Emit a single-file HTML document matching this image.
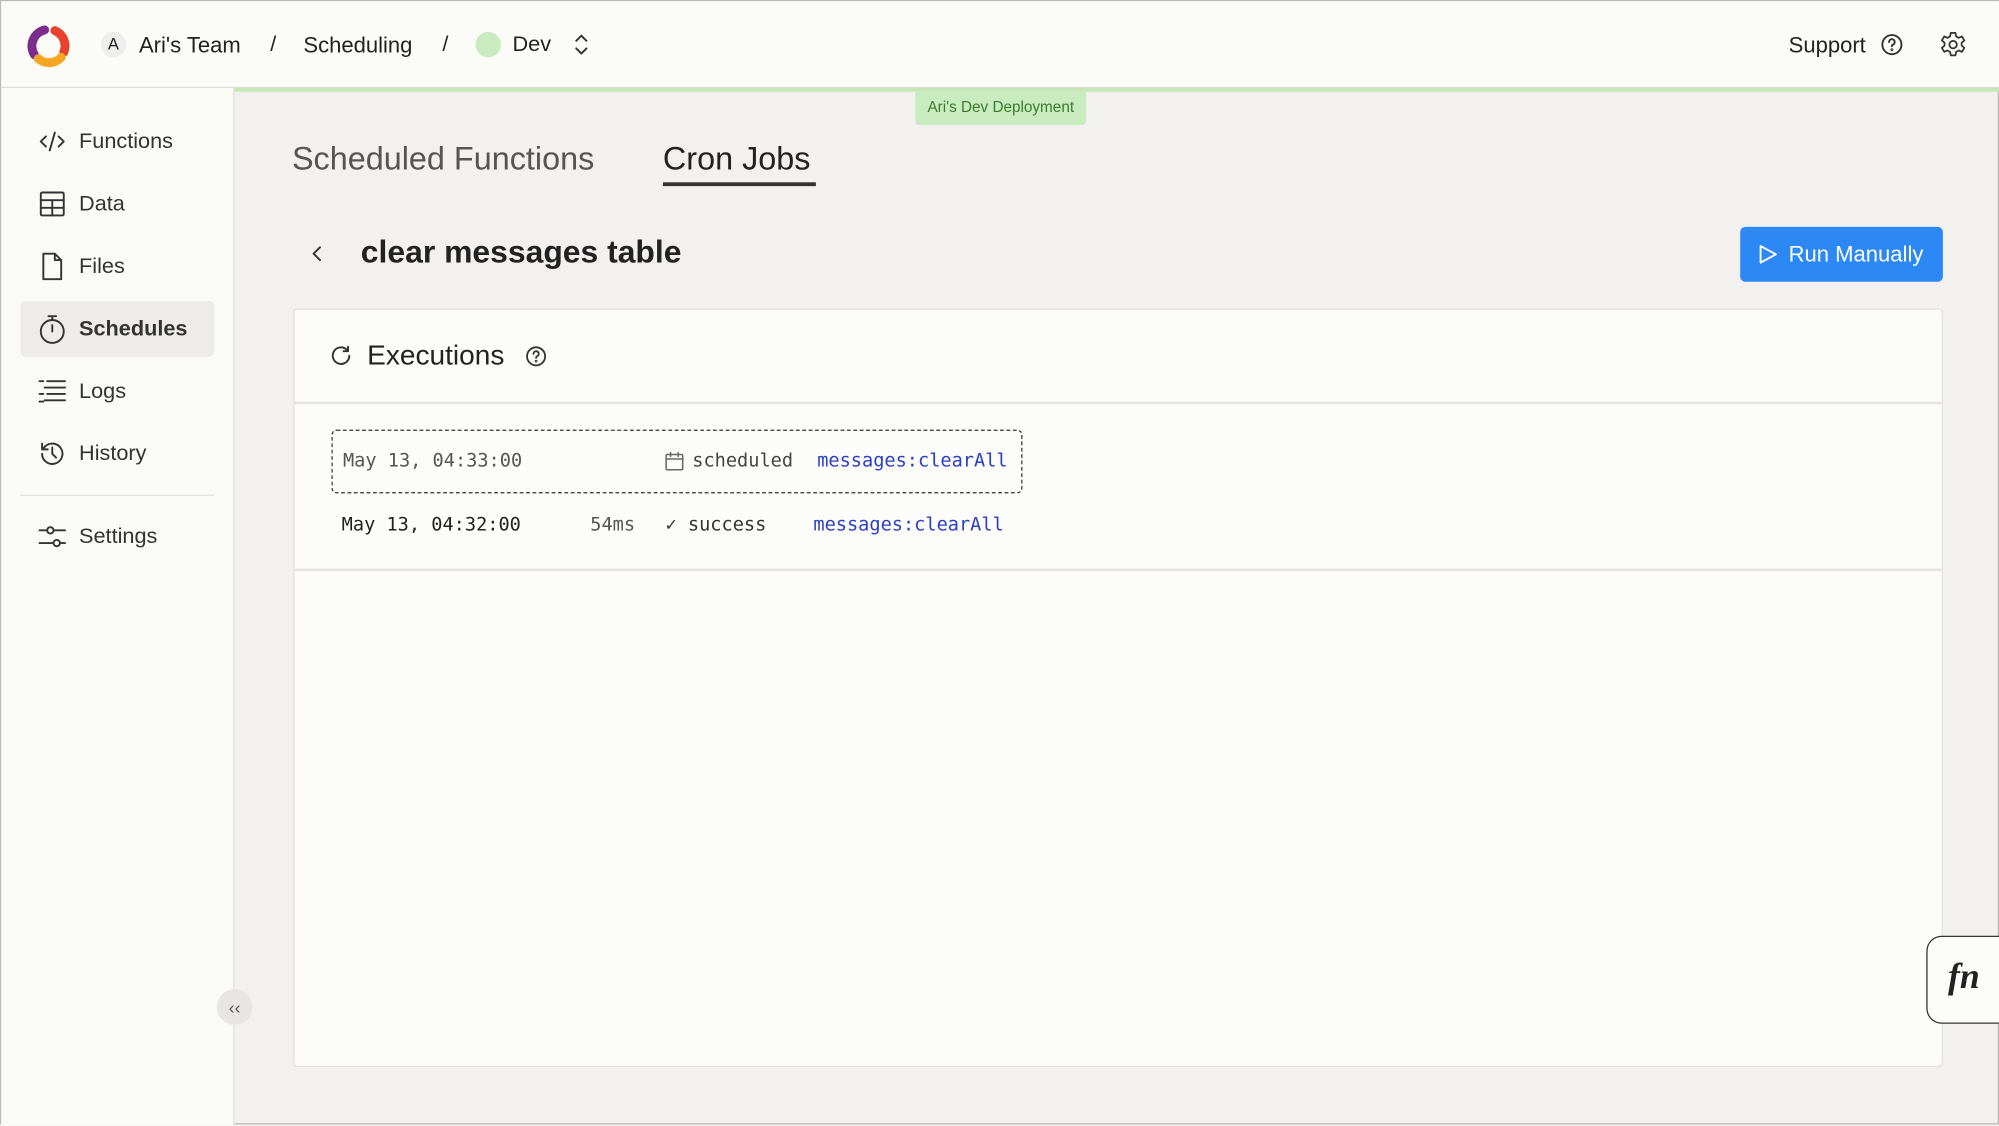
<!DOCTYPE html>
<html><head><meta charset="utf-8"><style>
*{box-sizing:border-box;margin:0;padding:0}
html,body{width:1999px;height:1125px;overflow:hidden;background:#f3f1ef}
#w{position:absolute;left:0;top:0;width:1568px;height:882px;transform:scale(1.27487);transform-origin:0 0;font-family:"Liberation Sans",sans-serif;color:#222;background:#f3f1ef;border:1px solid #bbb}
.a{position:absolute;white-space:nowrap}
svg{position:absolute;fill:none;stroke:#333;stroke-width:1.5;stroke-linecap:round;stroke-linejoin:round}
.side{font-size:17px;color:#333}
.mono{font-family:"DejaVu Sans Mono","Liberation Mono",monospace;font-size:14.6px}
</style></head><body><div id="w">
<div class="a" style="left:0;top:0;width:1568px;height:68px;background:#fbfbf8;border-bottom:1px solid #ddd"></div>
<svg style="left:18px;top:16px" width="38" height="38" viewBox="0 0 38 38"><path d="M24 7 A13 13 0 0 1 31 24" stroke="#e8432c" stroke-width="7"/><path d="M16 6.5 A13 13 0 0 0 8 26" stroke="#7b2d8e" stroke-width="7"/><path d="M11 29 A13 13 0 0 0 29 28" stroke="#f5a623" stroke-width="7"/></svg>
<div class="a" style="left:78px;top:24px;width:20px;height:20px;border-radius:50%;background:#eee;font-size:13px;text-align:center;line-height:20px">A</div>
<div class="a" style="left:108px;top:24px;font-size:17.3px">Ari's Team</div>
<div class="a" style="left:211px;top:24px;font-size:17px">/</div>
<div class="a" style="left:237px;top:24px;font-size:17.3px">Scheduling</div>
<div class="a" style="left:346px;top:24px;font-size:17px">/</div>
<div class="a" style="left:372px;top:24px;width:20px;height:20px;border-radius:50%;background:#c8ebbf"></div>
<div class="a" style="left:401px;top:24px;font-size:17px">Dev</div>
<svg style="left:449px;top:25px" width="12" height="18" viewBox="0 0 12 18"><path d="M2 6l4-4 4 4M2 12l4 4 4-4"/></svg>
<div class="a" style="left:1402px;top:24px;font-size:17.3px">Support</div>
<svg style="left:1474px;top:25px" width="18" height="18" viewBox="0 0 18 18"><circle cx="9" cy="9" r="7.5"/><path d="M6.8 7a2.2 2.2 0 1 1 3 2c-.6.3-.8.7-.8 1.3"/><circle cx="9" cy="13" r=".4"/></svg>
<svg style="left:1520px;top:23px" width="22" height="22" viewBox="0 0 24 24"><path d="M10 2h4l.6 3 2.2 1.2 2.8-1.2 2 3.4-2.3 2v2.4l2.3 2-2 3.4-2.8-1.2-2.2 1.2-.6 3h-4l-.6-3-2.2-1.2-2.8 1.2-2-3.4 2.3-2v-2.4l-2.3-2 2-3.4 2.8 1.2L9.4 5z"/><circle cx="12" cy="12" r="3.2"/></svg>
<div class="a" style="left:0;top:68px;width:183px;height:814px;background:#fafaf7;border-right:1px solid #e3e1de"></div>
<div class="a" style="left:15px;top:235px;width:152px;height:44px;background:#edecea;border-radius:4px"></div>
<svg style="left:30px;top:101px" width="20" height="18" viewBox="0 0 20 18"><path d="M5 5L1 9l4 4M15 5l4 4-4 4M12 2L8 16"/></svg>
<div class="a side" style="left:61px;top:100px">Functions</div>
<svg style="left:30px;top:149px" width="20" height="20" viewBox="0 0 20 20"><rect x="1" y="1" width="18" height="18" rx="1"/><path d="M1 7h18M1 13h18M10 7v12"/></svg>
<div class="a side" style="left:61px;top:149px">Data</div>
<svg style="left:31px;top:197px" width="18" height="22" viewBox="0 0 18 22"><path d="M2 1h9l5 5v15H2zM11 1v5h5"/></svg>
<div class="a side" style="left:61px;top:198px">Files</div>
<svg style="left:29px;top:245px" width="22" height="24" viewBox="0 0 22 24"><circle cx="11" cy="14" r="9"/><path d="M11 9v5M8 2h6M11 2v3"/></svg>
<div class="a side" style="left:61px;top:247px;font-weight:bold">Schedules</div>
<svg style="left:29px;top:296px" width="22" height="20" viewBox="0 0 22 20"><path d="M1 2h3M7 2h14M5 7h16M1 12h3M7 12h14M5 17h16M1 18h3"/></svg>
<div class="a side" style="left:61px;top:296px">Logs</div>
<svg style="left:29px;top:344px" width="22" height="22" viewBox="0 0 22 22"><path d="M3 11a8 8 0 1 0 2.3-5.7L3 7.5M3 3v4.5h4.5M11 6v5l3 3"/></svg>
<div class="a side" style="left:61px;top:345px">History</div>
<div class="a" style="left:15px;top:387px;width:152px;height:1px;background:#e3e1de"></div>
<svg style="left:29px;top:410px" width="22" height="20" viewBox="0 0 22 20"><path d="M1 5h6M12 5h9M1 15h11M17 15h4"/><circle cx="9.5" cy="5" r="2.5"/><circle cx="14.5" cy="15" r="2.5"/></svg>
<div class="a side" style="left:61px;top:410px">Settings</div>
<div class="a" style="left:169px;top:775px;width:28px;height:28px;border-radius:50%;background:#e8e6e3;font-size:14px;text-align:center;line-height:28px;color:#555">&lsaquo;&lsaquo;</div>
<div class="a" style="left:183px;top:68px;width:1385px;height:3px;background:#c8e6b5"></div>
<div class="a" style="left:717px;top:70px;width:134px;height:27px;background:#c8ebbf;border-radius:0 0 3px 3px;font-size:12px;color:#3d7a2e;text-align:center;line-height:27px">Ari's Dev Deployment</div>
<div class="a" style="left:228px;top:110px;font-size:25.4px;color:#555">Scheduled Functions</div>
<div class="a" style="left:519px;top:110px;font-size:25.4px;color:#222">Cron Jobs</div>
<div class="a" style="left:519px;top:142px;width:120px;height:3px;background:#333"></div>
<svg style="left:243px;top:191px" width="10" height="14" viewBox="0 0 10 14"><path d="M7 2L2 7l5 5"/></svg>
<div class="a" style="left:282px;top:183px;font-size:25px;font-weight:bold;color:#222">clear messages table</div>
<div class="a" style="left:1364px;top:177px;width:159px;height:43px;background:#2c88f5;border-radius:4px"></div>
<svg style="left:1378px;top:190px;stroke:#fff" width="16" height="17" viewBox="0 0 16 17"><path d="M2 2l12 6.5L2 15z"/></svg>
<div class="a" style="left:1402px;top:188px;font-size:17.3px;color:#fff">Run Manually</div>
<div class="a" style="left:229px;top:241px;width:1294px;height:595px;background:#fcfcfa;border:1px solid #e3e1de;border-radius:3px"></div>
<div class="a" style="left:229px;top:314px;width:1294px;height:2px;background:#e6e4e1"></div>
<div class="a" style="left:229px;top:445px;width:1294px;height:2px;background:#e6e4e1"></div>
<svg style="left:258px;top:269px" width="18" height="18" viewBox="0 0 18 18"><path d="M15 9a6.5 6.5 0 1 1-2-4.7M14 2v3.5h-3.5"/></svg>
<div class="a" style="left:287px;top:265px;font-size:22px;color:#222">Executions</div>
<svg style="left:411px;top:270px" width="17" height="17" viewBox="0 0 18 18"><circle cx="9" cy="9" r="7.5"/><path d="M6.8 7a2.2 2.2 0 1 1 3 2c-.6.3-.8.7-.8 1.3"/><circle cx="9" cy="13" r=".4"/></svg>
<div class="a" style="left:259px;top:336px;width:542px;height:50px;border:1.3px dashed #333;border-radius:4px"></div>
<div class="a mono" style="left:268px;top:352px;color:#555">May 13, 04:33:00</div>
<svg style="left:520px;top:353px;stroke:#666;stroke-width:1.2" width="16" height="16" viewBox="0 0 16 16"><rect x="1.5" y="2.5" width="13" height="12" rx="1"/><path d="M1.5 6h13M5 1v3M11 1v3"/></svg>
<div class="a mono" style="left:542px;top:352px;color:#444">scheduled</div>
<div class="a mono" style="left:640px;top:352px;color:#2a3fc4">messages:clearAll</div>
<div class="a mono" style="left:267px;top:402px;color:#222">May 13, 04:32:00</div>
<div class="a mono" style="left:462px;top:402px;color:#555">54ms</div>
<div class="a mono" style="left:521px;top:402px;color:#333">✓ success</div>
<div class="a mono" style="left:637px;top:402px;color:#2a3fc4">messages:clearAll</div>
<div class="a" style="left:1510px;top:733px;width:62px;height:69px;border:1.5px solid #333;border-radius:12px 0 0 12px;background:#fcfcfa;font-family:'Liberation Serif',serif;font-style:italic;font-weight:bold;font-size:28px;line-height:64px;padding-left:16px">fn</div>
</div></body></html>
